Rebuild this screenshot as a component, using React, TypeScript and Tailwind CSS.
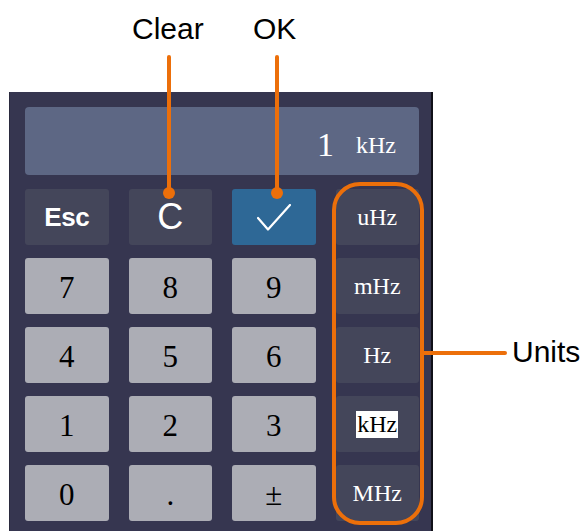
import React from "react";

const serif = { fontFamily: '"Liberation Serif", "Times New Roman", serif' };
const sans = { fontFamily: '"Liberation Sans", Arial, sans-serif' };

function Key({ children, className = "" }: { children: React.ReactNode; className?: string }) {
  return (
    <div className={`h-[56px] rounded-[3px] flex items-center justify-center ${className}`}>{children}</div>
  );
}

export default function App() {
  const units = ["uHz", "mHz", "Hz", "kHz", "MHz"];
  const rows = [
    ["7", "8", "9"],
    ["4", "5", "6"],
    ["1", "2", "3"],
    ["0", ".", "±"],
  ];
  return (
    <div className="relative w-[585px] h-[531px] bg-white overflow-hidden">
      <div className="pt-[92px] pl-[9px]">
        <div className="w-[424px] h-[439px] bg-[#363650] border-l border-[#2a2a3e] border-r-2 border-r-[#101018] pt-[15px] pl-[15px] pr-[12px]">
          <div className="h-[68px] rounded-[4px] bg-[#5d6784] flex items-center justify-end pt-[8px] pr-[23px] gap-[22px] text-white">
            <span style={serif} className="text-[34px] leading-none">1</span>
            <span style={serif} className="text-[24px] leading-none">kHz</span>
          </div>
          <div className="mt-[14px] grid grid-cols-4 gap-x-[20px] gap-y-[13px]">
            <Key className="bg-[#44465a]">
              <span style={sans} className="text-white text-[26px] font-bold tracking-[-0.5px]">Esc</span>
            </Key>
            <Key className="bg-[#44465a]">
              <span style={sans} className="text-white text-[36px] leading-none">C</span>
            </Key>
            <Key className="bg-[#2e6896]">
              <svg width="34" height="27" viewBox="0 0 34 27" fill="none">
                <path d="M1 14 L11 25.5 L33 1" stroke="white" strokeWidth="2.2" strokeLinecap="round" strokeLinejoin="round" />
              </svg>
            </Key>
            <Key className="bg-[#44465a]">
              <span style={serif} className="text-white text-[24px]">{units[0]}</span>
            </Key>
            {rows.map((r, i) => (
              <React.Fragment key={i}>
                {r.map((d) => (
                  <Key key={d} className="bg-[#acadb5]">
                    <span style={serif} className="text-black text-[31px] leading-none pt-[2px]">{d}</span>
                  </Key>
                ))}
                <Key className="bg-[#44465a]">
                  {units[i + 1] === "kHz" ? (
                    <span style={serif} className="bg-white text-black text-[24px] leading-[27px] px-[1px]">kHz</span>
                  ) : (
                    <span style={serif} className="text-white text-[24px]">{units[i + 1]}</span>
                  )}
                </Key>
              </React.Fragment>
            ))}
          </div>
        </div>
      </div>

      {/* annotations */}
      <div style={sans} className="absolute left-[132px] top-[11px] text-[30px] leading-[36px] text-black">Clear</div>
      <div style={sans} className="absolute left-[253px] top-[11px] text-[30px] leading-[36px] text-black">OK</div>
      <div style={sans} className="absolute left-[512px] top-[334px] text-[30px] leading-[36px] text-black">Units</div>

      <div className="absolute left-[167px] top-[55px] w-[4px] h-[138px] bg-[#ec6f0a] rounded-t-full" />
      <div className="absolute left-[163px] top-[187px] w-[12px] h-[12px] rounded-full bg-[#ec6f0a]" />
      <div className="absolute left-[275px] top-[55px] w-[4px] h-[138px] bg-[#ec6f0a] rounded-t-full" />
      <div className="absolute left-[271px] top-[187px] w-[12px] h-[12px] rounded-full bg-[#ec6f0a]" />

      <div className="absolute left-[332px] top-[182px] w-[92px] h-[343px] rounded-[28px] border-[4px] border-[#ec6f0a]" />
      <div className="absolute left-[423px] top-[351px] w-[84px] h-[4px] bg-[#ec6f0a] rounded-r-full" />
    </div>
  );
}
